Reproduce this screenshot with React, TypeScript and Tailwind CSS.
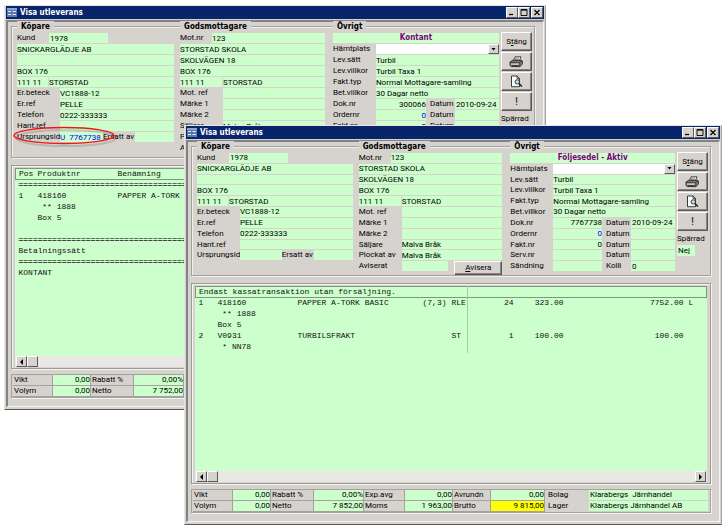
import type { ReactNode } from 'react'
import clsx from 'clsx'

type Line = {
  pos?: string
  product?: string
  name?: string
  size?: string
  unit?: string
  qty?: string
  price?: string
  total?: string
  flag?: string
  full?: string
}

type Delivery = {
  id: string
  status: string
  docNo: string
  origin: string
  netto: string
  heading: Line
  lines: Line[]
  guide: boolean
}

const RULE = '='.repeat(104)

const cashDelivery: Delivery = {
  id: 'kontant',
  status: 'Kontant',
  docNo: '300066',
  origin: 'U  7767738',
  netto: '7 752,00',
  guide: false,
  heading: { pos: 'Pos', product: 'Produktnr', name: 'Benämning' },
  lines: [
    { full: RULE },
    { pos: '1', product: '418160', name: 'PAPPER A-TORK BASIC' },
    { product: ' ** 1888' },
    { product: 'Box 5' },
    {},
    { full: RULE },
    { full: 'Betalningssätt' },
    { full: RULE },
    { full: 'KONTANT' },
  ],
}

const noteDelivery: Delivery = {
  id: 'foljesedel',
  status: 'Följesedel - Aktiv',
  docNo: '7767738',
  origin: '',
  netto: '7 852,00',
  guide: true,
  heading: { full: 'Endast kassatransaktion utan försäljning.' },
  lines: [
    { pos: '1', product: '418160', name: 'PAPPER A-TORK BASIC', size: '(7,3)', unit: 'RLE', qty: '24', price: '323.00', total: '7752.00', flag: 'L' },
    { product: ' ** 1888' },
    { product: 'Box 5' },
    { pos: '2', product: 'V0931', name: 'TURBILSFRAKT', unit: 'ST', qty: '1', price: '100.00', total: '100.00' },
    { product: ' * NN78' },
  ],
}

function Input({
  id,
  label,
  value = '',
  className,
}: {
  id?: string
  label?: string
  value?: string
  className?: string
}) {
  return (
    <input
      id={id}
      aria-label={label}
      readOnly
      value={value}
      className={clsx('h-full min-w-0 rounded-none bg-[#ccffcc] outline-none', className)}
    />
  )
}

function Row({ children }: { children?: ReactNode }) {
  return <div className="flex min-h-0 min-w-0 items-stretch">{children}</div>
}

function Label({ htmlFor, className, children }: { htmlFor: string; className: string; children: ReactNode }) {
  return (
    <label htmlFor={htmlFor} className={clsx('shrink-0 whitespace-nowrap', className)}>
      {children}
    </label>
  )
}

function Field({ id, label, value, width = 'w-[43px]' }: { id: string; label: string; value?: string; width?: string }) {
  return (
    <Row>
      <Label htmlFor={id} className={width}>{label}</Label>
      <Input id={id} value={value} className="flex-1" />
    </Row>
  )
}

function Column({ title, tall, className, children }: {
  title: string
  tall: boolean
  className?: string
  children: ReactNode
}) {
  return (
    <section className={clsx('-mt-[6px] flex min-w-0 flex-col', className)}>
      <h2 className="h-[12px] self-start bg-[#d6d3ce] px-[4px] font-['DejaVu_Sans_Condensed','DejaVu_Sans',sans-serif] font-bold leading-[12px]">
        {title}
      </h2>
      <div
        className={clsx(
          'grid grid-cols-1 grid-rows-[repeat(11,minmax(0,1fr))] gap-y-px leading-[10px]',
          tall ? 'h-[120px]' : 'h-[118px]',
        )}
      >
        {children}
      </div>
    </section>
  )
}

function DateRow({ id, label, value, blue, second = 'Datum', date }: {
  id: string
  label: string
  value?: string
  blue?: boolean
  second?: string
  date?: string
}) {
  return (
    <Row>
      <Label htmlFor={id} className="w-[43px]">{label}</Label>
      <Input id={id} value={value} className={clsx('flex-1 text-right', blue && 'text-[#0000ff]')} />
      <Label htmlFor={`${id}-d`} className="w-[29px] pl-[4px]">{second}</Label>
      <Input id={`${id}-d`} value={date} className="w-[44px] pl-px" />
    </Row>
  )
}

const raised =
  'border border-t-white border-l-white border-r-[#5a5a5a] border-b-[#5a5a5a] bg-[#d6d3ce]'

function ToolButton({ label, children }: { label: string; children: ReactNode }) {
  return (
    <button
      type="button"
      aria-label={label}
      className={clsx('flex h-[19px] w-[31px] items-center justify-center shadow-[inset_-1px_-1px_0_#848284]', raised)}
    >
      {children}
    </button>
  )
}

function PrinterIcon() {
  return (
    <svg width="14" height="12" viewBox="0 0 14 12" aria-hidden="true">
      <path d="M4.5 4.5 6 .8h6L10.5 4.5z" fill="#fff" stroke="#222" strokeWidth=".8" />
      <path d="M6 2.2h4M5.5 3.4h4" stroke="#555" strokeWidth=".6" />
      <path d="M1 6.2 3.6 4.3h8.6L13.3 5v3.2L10.8 10.6H2.4L1 9.4z" fill="#8c8c88" stroke="#222" strokeWidth=".9" />
      <path d="M1.2 6.4h9.5l2.4-1.6M10.8 6.4v4" fill="none" stroke="#222" strokeWidth=".8" />
      <path d="M2.2 8.2h7.4" stroke="#eee" strokeWidth=".9" />
      <path d="M2.6 9.6h7" stroke="#222" strokeWidth=".8" />
      <path d="M8 7.3h1.4" stroke="#d8c820" strokeWidth=".8" />
    </svg>
  )
}

function PreviewIcon() {
  return (
    <svg width="13" height="13" viewBox="0 0 13 13" aria-hidden="true">
      <path d="M1.5 1h5.6l2.4 2.4v8.3h-8z" fill="#fff" stroke="#222" strokeWidth=".9" />
      <path d="M7 1v2.6h2.5" fill="none" stroke="#222" strokeWidth=".8" />
      <circle cx="7.3" cy="6.9" r="2.2" fill="#a5e3ea" stroke="#333" strokeWidth=".9" />
      <path d="m8.9 8.5 3 3" stroke="#222" strokeWidth="1.7" />
    </svg>
  )
}

function FormIcon() {
  return (
    <svg width="10" height="9" viewBox="0 0 10 9" aria-hidden="true">
      <path d="M0 0h10v9H0z" fill="#5878b0" />
      <path d="M0 0h10v2H0z" fill="#8ca6d4" />
      <path d="M1 3.5h3M1 6.5h3M5.5 3.5h3.5M5.5 6.5h3.5" stroke="#e8eef8" strokeWidth="1.2" />
    </svg>
  )
}

function TitleBar() {
  const button = clsx('flex h-[11px] w-[12px] items-center justify-center', raised)
  return (
    <header className="flex h-[13px] items-center bg-[#08246b] pl-px pr-px">
      <FormIcon />
      <h1 className="ml-[3px] flex-1 font-['DejaVu_Sans_Condensed','DejaVu_Sans',sans-serif] font-bold leading-[12px] text-white">
        Visa utleverans
      </h1>
      <button type="button" aria-label="Minimera" className={button}>
        <svg width="8" height="7" viewBox="0 0 8 7"><path d="M1 5.5h4" stroke="#000" strokeWidth="1.3" /></svg>
      </button>
      <button type="button" aria-label="Maximera" className={button}>
        <svg width="8" height="7" viewBox="0 0 8 7"><path d="M1 .5h6v6H1zM1 1.2h6" fill="none" stroke="#000" strokeWidth=".9" /></svg>
      </button>
      <button type="button" aria-label="Stäng fönster" className={clsx(button, 'ml-px')}>
        <svg width="8" height="7" viewBox="0 0 8 7"><path d="m1.5 1 5 5m0-5-5 5" stroke="#000" strokeWidth="1.2" /></svg>
      </button>
    </header>
  )
}

function LineRow({ line, guide }: { line: Line; guide: boolean }) {
  if (line.full && !guide) {
    return (
      <tr className="h-[11px]">
        <td colSpan={9} className={clsx('overflow-hidden pl-[3px]', line.full === RULE && 'font-bold text-[#444]')}>
          {line.full}
        </td>
      </tr>
    )
  }
  return (
    <tr className="h-[11px]">
      {line.full ? (
        <td colSpan={5} className="border-r border-[#a9c9a9] pl-[3px]">{line.full}</td>
      ) : (
        <>
          <td className="pl-[3px]">{line.pos}</td>
          <td className="pl-[2px]">{line.product}</td>
          <td className="pl-[2px]">{line.name}</td>
          <td className="pl-[2px]">{line.size}</td>
          <td className={clsx('pl-px', guide && 'border-r border-[#a9c9a9]')}>{line.unit}</td>
        </>
      )}
      <td className="text-right">{line.qty}</td>
      <td className="text-right">{line.price}</td>
      <td className="text-right">{line.total}</td>
      <td className="pl-[5px]">{line.flag}</td>
    </tr>
  )
}

function Lines({ data }: { data: Delivery }) {
  return (
    <section
      className={clsx(
        'mt-[7px] flex flex-col border border-[#9c9a96] bg-[#d6d3ce] pb-px pl-[3px] pr-[3px] pt-[2px] shadow-[inset_1px_1px_0_#f5f4f2,1px_1px_0_#f5f4f2]',
        data.guide ? 'h-[201px]' : 'h-[204px]',
      )}
    >
      <div className="min-h-0 flex-1 overflow-hidden bg-[#ccffcc]">
        <table className="w-full table-fixed border-collapse whitespace-pre font-['Liberation_Mono',monospace] text-[8px] leading-[10px] text-[#111]">
          <colgroup>
            <col className="w-[20px]" />
            <col className="w-[80px]" />
            <col className="w-[125px]" />
            <col className="w-[30px]" />
            <col className="w-[17px]" />
            <col className="w-[46px]" />
            <col className="w-[50px]" />
            <col className="w-[120px]" />
            <col />
          </colgroup>
          <thead className="border border-[#7f967f]">
            <LineRow line={data.heading} guide={data.guide} />
          </thead>
          <tbody>
            {data.lines.map((line, i) => (
              <LineRow key={i} line={line} guide={data.guide} />
            ))}
          </tbody>
        </table>
      </div>
      <div className="flex h-[11px] items-stretch bg-[#eae8e4] pl-px">
        <button type="button" aria-label="Rulla åt vänster" className={clsx('flex w-[11px] items-center justify-center', raised)}>
          <svg width="5" height="6" viewBox="0 0 5 6"><path d="M4 0v6L1 3z" /></svg>
        </button>
        <div className={clsx('w-[11px]', raised)} />
        <button type="button" aria-label="Rulla åt höger" className={clsx('ml-auto mr-px flex w-[11px] items-center justify-center', raised)}>
          <svg width="5" height="6" viewBox="0 0 5 6"><path d="M1 0v6l3-3z" /></svg>
        </button>
      </div>
    </section>
  )
}

function Totals({ netto }: { netto: string }) {
  const head = 'border-b border-r border-[#a5a29e] pl-px text-left font-normal'
  const num = 'border-b border-r border-[#a5a29e] bg-[#ccffcc] text-right'
  const side = 'border-b border-[#d6d3ce] pl-[3px] text-left font-normal'
  return (
    <div className="mt-[5px] border border-[#a5a29e] pl-px pr-[2px] shadow-[1px_1px_0_#f5f4f2]">
      <table className="w-full table-fixed border-separate border-spacing-0 whitespace-pre leading-[10px]">
        <colgroup>
          <col className="w-[40px]" />
          <col className="w-[38px]" />
          <col className="w-[43px]" />
          <col className="w-[50px]" />
          <col className="w-[41px]" />
          <col className="w-[48px]" />
          <col className="w-[38px]" />
          <col className="w-[54px]" />
          <col className="w-[44px]" />
          <col />
        </colgroup>
        <tbody>
          <tr>
            <th scope="row" className={head}>Vikt</th>
            <td className={num}>0,00</td>
            <th scope="row" className={head}>Rabatt %</th>
            <td className={num}>0,00%</td>
            <th scope="row" className={head}>Exp.avg</th>
            <td className={num}>0,00</td>
            <th scope="row" className={head}>Avrundn</th>
            <td className={num}>0,00</td>
            <th scope="row" className={side}>Bolag</th>
            <td className="border-b border-[#c4d8c0] bg-[#ccffcc] pl-px">Klarabergs  Järnhandel</td>
          </tr>
          <tr>
            <th scope="row" className={head}>Volym</th>
            <td className={num}>0,00</td>
            <th scope="row" className={head}>Netto</th>
            <td className={num}>{netto}</td>
            <th scope="row" className={head}>Moms</th>
            <td className={num}>1 963,00</td>
            <th scope="row" className={head}>Brutto</th>
            <td className="border-b border-r border-[#a5a29e] bg-[#ffff00] text-right">9 815,00</td>
            <th scope="row" className={side}>Lager</th>
            <td className="border-b border-[#c4d8c0] bg-[#ccffcc] pl-px">Klarabergs Järnhandel AB</td>
          </tr>
        </tbody>
      </table>
    </div>
  )
}

function DeliveryWindow({ data, tall = false, className }: { data: Delivery; tall?: boolean; className: string }) {
  const id = (name: string) => `${data.id}-${name}`
  return (
    <article
      className={clsx(
        'absolute border border-l-[#e8e6e2] border-t-[#e8e6e2] border-r-[#a5a29e] border-b-[#5a5957] bg-[#d6d3ce] px-px pb-[2px]',
        className,
      )}
    >
      <TitleBar />
      <div className="mt-px border-l-2 border-t-2 border-l-[#848284] border-t-[#848284] border-b border-r border-b-[#f5f4f2] border-r-[#f5f4f2] pb-[8px] pl-[3px] pr-[8px] pt-[4px]">
        <div
          className="grid grid-cols-[minmax(0,156fr)_minmax(0,150fr)_minmax(0,173fr)_auto] border border-[#a5a29e] pb-[4px] pl-[5px] pr-[2px] shadow-[inset_1px_1px_0_#f0efec,1px_1px_0_#f0efec]"
        >
          <Column title="Köpare" tall={tall}>
            <Row>
              <Label htmlFor={id('kund')} className="w-[32px]">Kund</Label>
              <Input id={id('kund')} value="1978" className="w-[59px] pl-px" />
            </Row>
            <Row><Input label="Namn" value="SNICKARGLÄDJE AB" className="flex-1" /></Row>
            <Row><Input label="Adress" className="flex-1" /></Row>
            <Row><Input label="Box" value="BOX 176" className="flex-1" /></Row>
            <Row>
              <Input label="Postnr" value="111 11" className="mr-px w-[31px]" />
              <Input label="Ort" value="STORSTAD" className="flex-1" />
            </Row>
            <Field id={id('beteck')} label="Er.beteck" value="VC1888-12" />
            <Field id={id('ref')} label="Er.ref" value="PELLE" />
            <Field id={id('tel')} label="Telefon" value="0222-333333" />
            <Field id={id('hant')} label="Hant.ref" />
            <Row>
              <Label htmlFor={id('urspr')} className="w-[43px]">Ursprungsid</Label>
              <Input id={id('urspr')} value={data.origin} className="flex-1 whitespace-pre text-[#0000ff]" />
              <Label htmlFor={id('ersatt')} className="w-[32px]">Ersatt av</Label>
              <Input id={id('ersatt')} className="w-[39px]" />
            </Row>
          </Column>

          <Column title="Godsmottagare" tall={tall} className="ml-[6px]">
            <Field id={id('motnr')} label="Mot.nr" value="123" width="w-[32px]" />
            <Row><Input label="Mottagare" value="STORSTAD SKOLA" className="flex-1" /></Row>
            <Row><Input label="Gata" value="SKOLVÄGEN 18" className="flex-1" /></Row>
            <Row><Input label="Box mottagare" value="BOX 176" className="flex-1" /></Row>
            <Row>
              <Input label="Postnr mottagare" value="111 11" className="mr-px w-[42px]" />
              <Input label="Ort mottagare" value="STORSTAD" className="flex-1" />
            </Row>
            <Field id={id('motref')} label="Mot. ref" />
            <Field id={id('m1')} label="Märke 1" />
            <Field id={id('m2')} label="Märke 2" />
            <Field id={id('salj')} label="Säljare" value="Malva Bråk" />
            <Field id={id('plock')} label="Plockat av" value="Malva Bråk" />
            <Row>
              <Label htmlFor={id('avis')} className="w-[43px]">Aviserat</Label>
              <Input id={id('avis')} className="w-[46px]" />
              <button type="button" className={clsx('ml-auto h-[14px] w-[48px] shrink-0 shadow-[inset_-1px_-1px_0_#848284]', raised)}>
                <u>A</u>visera
              </button>
            </Row>
          </Column>

          <Column title="Övrigt" tall={tall} className="ml-[8px]">
            <output className="block bg-[#ccffcc] text-center font-['DejaVu_Sans_Condensed','DejaVu_Sans',sans-serif] font-bold text-[#800080]">
              {data.status}
            </output>
            <Row>
              <Label htmlFor={id('hamt')} className="w-[43px]">Hämtplats</Label>
              <div className="relative flex-1 bg-white">
                <select id={id('hamt')} className="block h-full w-full appearance-none outline-none">
                  <option></option>
                </select>
                <span className={clsx('pointer-events-none absolute inset-y-0 right-0 flex w-[11px] items-center justify-center', raised)}>
                  <svg width="5" height="3" viewBox="0 0 5 3"><path d="M.5 0h4l-2 2.5z" /></svg>
                </span>
              </div>
            </Row>
            <Field id={id('satt')} label="Lev.sätt" value="Turbil" />
            <Field id={id('villkor')} label="Lev.villkor" value="Turbil Taxa 1" />
            <Field id={id('typ')} label="Fakt.typ" value="Normal Mottagare-samling" />
            <Field id={id('bet')} label="Bet.villkor" value="30 Dagar netto" />
            <DateRow id={id('dok')} label="Dok.nr" value={data.docNo} date="2010-09-24" />
            <DateRow id={id('order')} label="Ordernr" value="0" blue />
            <DateRow id={id('fakt')} label="Fakt.nr" value="0" />
            <DateRow id={id('serv')} label="Serv.nr" />
            <DateRow id={id('sand')} label="Sändning" second="Kolli" date="0" />
          </Column>

          <div className="ml-[2px] flex flex-col gap-px pt-[5px]">
            <ToolButton label="Stäng"><span>S<u>t</u>äng</span></ToolButton>
            <ToolButton label="Skriv ut"><PrinterIcon /></ToolButton>
            <ToolButton label="Förhandsgranska"><PreviewIcon /></ToolButton>
            <ToolButton label="Markera"><span className="text-[10px]">!</span></ToolButton>
            <label htmlFor={id('sparr')} className="mt-[2px] leading-[10px]">Spärrad</label>
            <div className="flex h-[11px] leading-[10px]">
              <Input id={id('sparr')} value="Nej" className="w-[18px] pl-px" />
            </div>
          </div>
        </div>

        <Lines data={data} />
        <Totals netto={data.netto} />
      </div>
    </article>
  )
}

export default function App() {
  return (
    <main className="relative min-h-[532px] overflow-hidden bg-white font-[Roboto,'Liberation_Sans',sans-serif] text-[8px] text-black">
      <DeliveryWindow data={cashDelivery} tall className="left-[4px] right-[182px] top-[5px]" />
      <svg className="pointer-events-none absolute left-[10px] top-[124px]" width="110" height="26" viewBox="0 0 110 26" fill="none" aria-hidden="true">
        <ellipse cx="56" cy="14" rx="50" ry="8" stroke="#000" strokeOpacity=".14" strokeWidth="2" />
        <ellipse cx="54" cy="11.5" rx="50" ry="8" stroke="#f01414" strokeWidth="1.4" />
      </svg>
      <DeliveryWindow data={noteDelivery} className="left-[184px] right-[6px] top-[125px]" />
    </main>
  )
}
